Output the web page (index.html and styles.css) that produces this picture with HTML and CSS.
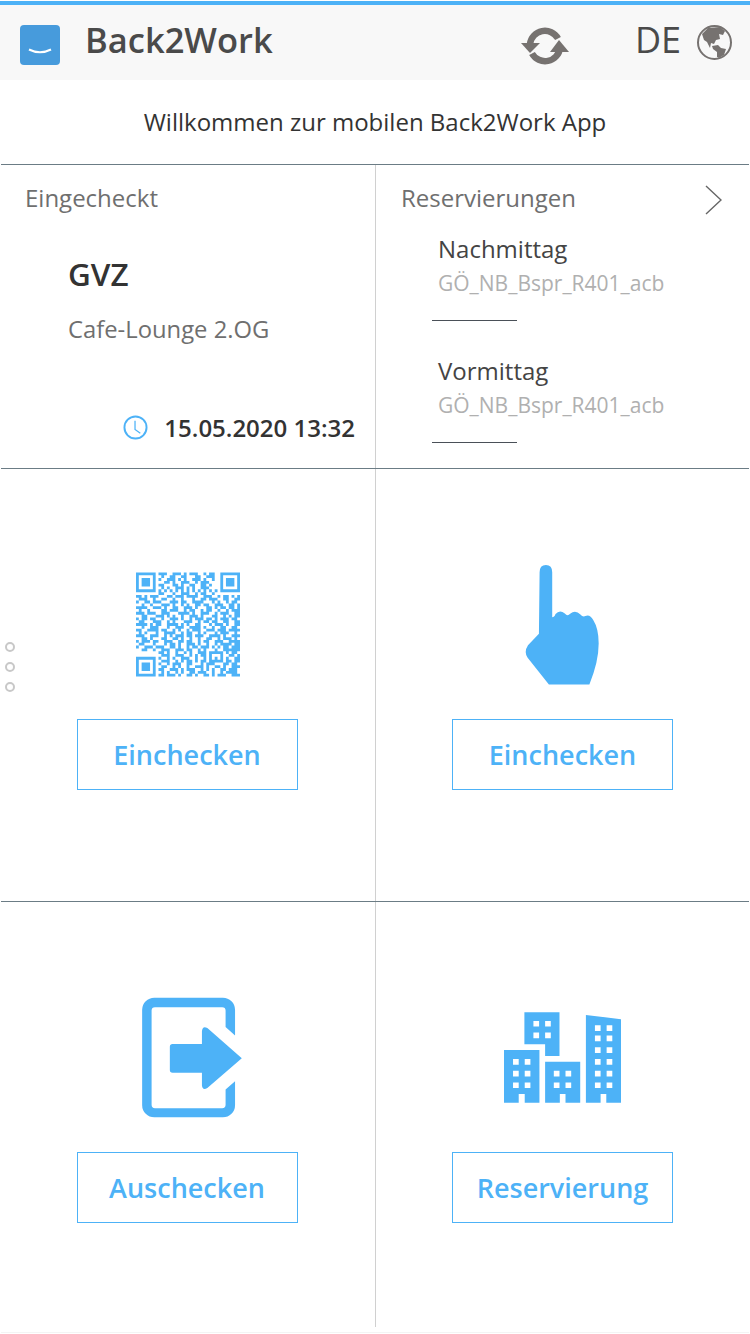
FILE: index.html
```html
<!DOCTYPE html>
<html>
    <head>
        <meta charset="UTF-8">
        <title>Back2Work</title>
        <link rel="stylesheet" href="styles.css">
    </head>
    <body>
        <div class="app">
            <header class="topbar">
                <svg class="logo" viewBox="0 0 40 40">
                    <rect width="40" height="40" rx="4" fill="#479bdc"/>
                    <path d="M9 24.500Q20 30 31 24.500" fill="none" stroke="#fff" stroke-width="2"/>
                </svg>
                <h1 class="brand">Back2Work</h1>
                <svg class="sync" viewBox="0 0 60 50">
                    <path d="M15 24A15 15 0 0 1 43 18.500" fill="none" stroke="#767270" stroke-width="6.500"/>
                    <path d="M6 23H25L15 33Z" fill="#767270"/>
                    <path d="M45 28A15 15 0 0 1 17 33.500" fill="none" stroke="#767270" stroke-width="6.500"/>
                    <path d="M35 32H54L44 20Z" fill="#767270"/>
                </svg>
                <span class="lang">DE</span>
                <svg class="globe" viewBox="0 0 45 45">
                    <circle cx="22.500" cy="22.500" r="16.500" fill="none" stroke="#767270" stroke-width="2"/>
                    <path d="M10 14L16 8 28 7 33 11 31 15 27 14 28 19 24 20 22 24 19 23 18 28 15 22 12 20Z" fill="#767270"/>
                    <path d="M20 26L26 25 29 28 34 29 32 35 27 38 25 37 25 32 21 29Z" fill="#767270"/>
                </svg>
            </header>

            <p class="welcome">Willkommen zur mobilen Back2Work App</p>

            <section class="grid info">
                <div class="cell checkin">
                    <h2 class="label">Eingecheckt</h2>
                    <div class="place">GVZ</div>
                    <div class="room">Cafe-Lounge 2.OG</div>
                    <div class="stamp">
                        <svg class="clock" viewBox="0 0 26 26">
                            <circle cx="13" cy="13" r="11.500" fill="none" stroke="#4db2f7" stroke-width="2"/>
                            <path d="M12.500 6V15L18 19" fill="none" stroke="#4db2f7" stroke-width="1.300"/>
                        </svg>
                        <span>15.05.2020 13:32</span>
                    </div>
                </div>
                <div class="cell reservations">
                    <div class="res-head">
                        <h2 class="label">Reservierungen</h2>
                        <svg class="chevron" viewBox="0 0 17 30">
                            <path d="M1 1L16 15 1 29" fill="none" stroke="#666" stroke-width="1.400"/>
                        </svg>
                    </div>
                    <div class="res-item">
                        <div class="res-time">Nachmittag</div>
                        <div class="res-room">GÖ_NB_Bspr_R401_acb</div>
                    </div>
                    <div class="res-item">
                        <div class="res-time">Vormittag</div>
                        <div class="res-room">GÖ_NB_Bspr_R401_acb</div>
                    </div>
                </div>
            </section>

            <section class="grid action-row">
                <div class="cell action">
                    <div class="icon-slot">
                        <svg class="qr" viewBox="0 0 37 37">
                            <path fill="#4db2f7" fill-rule="evenodd" d="M0 0H7V7H0ZM1 1V6H6V1ZM2 2H5V5H2ZM30 0H37V7H30ZM31 1V6H36V1ZM32 2H35V5H32ZM0 30H7V37H0ZM1 31V36H6V31ZM2 32H5V35H2Z"/>
                            <path fill="none" stroke="#4db2f7" d="M8 .5H11M13 .5H16M17 .5H18M19 .5H22M24 .5H25M26 .5H28M9 1.500H10M12 1.500H14M16 1.500H18M21 1.500H23M25 1.500H28M8 2.500H9M11 2.500H14M15 2.500H16M17 2.500H18M20 2.500H23M24 2.500H25M27 2.500H28M10 3.500H12M13 3.500H14M16 3.500H19M21 3.500H22M23 3.500H26M8 4.500H10M13 4.500H15M16 4.500H17M19 4.500H21M23 4.500H25M26 4.500H27M9 5.500H10M11 5.500H12M14 5.500H17M18 5.500H19M20 5.500H21M23 5.500H26M8 6.500H9M10 6.500H11M12 6.500H13M14 6.500H15M16 6.500H17M18 6.500H19M20 6.500H21M22 6.500H23M24 6.500H25M26 6.500H27M28 6.500H29M8 7.500H10M13 7.500H14M16 7.500H19M21 7.500H22M23 7.500H25M27 7.500H28"/>
                            <path fill="none" stroke="#4db2f7" d="M0 8.500H2M3 8.500H4M5 8.500H8M11 8.500H13M14 8.500H17M18 8.500H22M24 8.500H27M29 8.500H30M31 8.500H33M34 8.500H35M36 8.500H37M1 9.500H4M6 9.500H7M9 9.500H11M13 9.500H14M16 9.500H17M20 9.500H21M23 9.500H25M26 9.500H29M31 9.500H33M35 9.500H37M0 10.500H1M3 10.500H5M6 10.500H9M12 10.500H15M16 10.500H18M20 10.500H24M27 10.500H28M29 10.500H30M32 10.500H33M34 10.500H36M2 11.500H3M5 11.500H6M9 11.500H12M13 11.500H14M16 11.500H17M18 11.500H19M21 11.500H23M24 11.500H26M28 11.500H31M33 11.500H35M36 11.500H37M0 12.500H4M6 12.500H9M10 12.500H11M13 12.500H15M17 12.500H20M21 12.500H22M25 12.500H27M28 12.500H29M30 12.500H32M33 12.500H35M36 12.500H37M1 13.500H2M4 13.500H5M9 13.500H11M12 13.500H15M17 13.500H18M19 13.500H21M23 13.500H24M25 13.500H27M29 13.500H30M32 13.500H33M34 13.500H37M0 14.500H3M4 14.500H7M9 14.500H12M15 14.500H19M20 14.500H21M23 14.500H26M28 14.500H29M30 14.500H33M35 14.500H37M2 15.500H4M7 15.500H10M11 15.500H12M13 15.500H14M16 15.500H17M19 15.500H22M23 15.500H24M27 15.500H29M31 15.500H32M33 15.500H34M35 15.500H37M0 16.500H1M2 16.500H4M5 16.500H7M9 16.500H10M12 16.500H15M16 16.500H17M19 16.500H20M21 16.500H24M25 16.500H27M28 16.500H29M30 16.500H33M34 16.500H36M1 17.500H3M6 17.500H9M11 17.500H12M13 17.500H14M17 17.500H20M22 17.500H23M24 17.500H26M27 17.500H29M31 17.500H33M35 17.500H37M0 18.500H4M5 18.500H6M7 18.500H9M11 18.500H15M16 18.500H17M18 18.500H19M21 18.500H23M26 18.500H27M28 18.500H31M32 18.500H33M35 18.500H37"/>
                            <path fill="none" stroke="#4db2f7" d="M2 19.500H3M5 19.500H8M11 19.500H12M14 19.500H17M19 19.500H23M24 19.500H25M27 19.500H28M30 19.500H32M34 19.500H36M0 20.500H2M4 20.500H8M9 20.500H11M13 20.500H14M15 20.500H16M18 20.500H19M20 20.500H23M25 20.500H28M29 20.500H32M33 20.500H37M1 21.500H2M3 21.500H4M7 21.500H8M10 21.500H14M16 21.500H17M18 21.500H20M22 21.500H23M24 21.500H25M28 21.500H29M30 21.500H33M35 21.500H36M0 22.500H3M5 22.500H8M10 22.500H11M12 22.500H13M14 22.500H17M18 22.500H20M21 22.500H24M26 22.500H30M31 22.500H32M34 22.500H37M2 23.500H4M5 23.500H6M9 23.500H11M13 23.500H15M16 23.500H17M19 23.500H20M22 23.500H23M25 23.500H27M29 23.500H30M31 23.500H34M35 23.500H36M0 24.500H1M2 24.500H5M6 24.500H8M10 24.500H13M15 24.500H17M18 24.500H20M22 24.500H23M24 24.500H26M28 24.500H31M33 24.500H37M1 25.500H3M6 25.500H7M10 25.500H11M12 25.500H14M15 25.500H16M18 25.500H21M22 25.500H23M25 25.500H26M28 25.500H29M30 25.500H34M35 25.500H37M0 26.500H1M3 26.500H6M7 26.500H10M12 26.500H14M15 26.500H16M18 26.500H19M20 26.500H22M23 26.500H26M27 26.500H28M29 26.500H30M31 26.500H33M34 26.500H37M2 27.500H4M6 27.500H7M9 27.500H12M14 27.500H17M18 27.500H20M22 27.500H23M24 27.500H25M28 27.500H29M31 27.500H37M8 28.500H10M11 28.500H12M14 28.500H15M17 28.500H18M19 28.500H20M22 28.500H25M26 28.500H31M32 28.500H33M34 28.500H36"/>
                            <path fill="none" stroke="#4db2f7" d="M9 29.500H12M14 29.500H17M19 29.500H20M21 29.500H22M23 29.500H25M26 29.500H27M30 29.500H31M33 29.500H35M36 29.500H37M8 30.500H9M11 30.500H12M13 30.500H14M16 30.500H19M21 30.500H22M24 30.500H25M26 30.500H27M28 30.500H29M30 30.500H31M32 30.500H33M35 30.500H37M9 31.500H12M14 31.500H15M16 31.500H17M18 31.500H20M21 31.500H22M23 31.500H25M26 31.500H31M32 31.500H34M35 31.500H37M8 32.500H9M11 32.500H12M13 32.500H16M18 32.500H20M23 32.500H24M25 32.500H28M31 32.500H33M34 32.500H36M9 33.500H11M13 33.500H14M15 33.500H16M18 33.500H19M21 33.500H24M25 33.500H26M28 33.500H30M31 33.500H32M34 33.500H37M8 34.500H10M12 34.500H15M16 34.500H17M18 34.500H21M23 34.500H24M25 34.500H26M27 34.500H28M30 34.500H32M33 34.500H36M9 35.500H10M11 35.500H12M14 35.500H15M16 35.500H17M19 35.500H21M22 35.500H25M27 35.500H28M30 35.500H31M32 35.500H36M8 36.500H10M11 36.500H14M15 36.500H16M18 36.500H20M21 36.500H22M24 36.500H26M27 36.500H28M29 36.500H32M34 36.500H37"/>
                        </svg>
                    </div>
                    <a class="btn">Einchecken</a>
                </div>
                <div class="cell action">
                    <div class="icon-slot">
                        <svg class="hand" viewBox="70 20 235 375">
                            <path fill="#4db2f7" d="M120 50Q120 28 139 28 158 28 158 50V185Q165 187 168 176 180 162 196 174 204 184 212 175 228 163 243 177 250 186 258 182 272 176 282 195 298 220 298 265 298 320 270 388H148L84 308Q72 290 85 270L118 235Z"/>
                        </svg>
                    </div>
                    <a class="btn">Einchecken</a>
                </div>
            </section>

            <section class="grid action-row last">
                <div class="cell action">
                    <div class="icon-slot">
                        <svg class="exit" viewBox="25 30 330 370">
                            <path fill="#4db2f7" d="M330 150V74A36 36 0 0 0 294 38H91A36 36 0 0 0 55 74V356A36 36 0 0 0 91 392H294A36 36 0 0 0 330 356V285L302 310V355A10 10 0 0 1 292 365H93A10 10 0 0 1 83 355V76A10 10 0 0 1 93 66H292A10 10 0 0 1 302 76V125Z"/>
                            <path fill="#4db2f7" d="M145 175H232V137Q234 120 248 128L350 217 248 305Q234 314 232 298V260H145Q137 260 137 252V183Q137 175 145 175Z"/>
                        </svg>
                    </div>
                    <a class="btn">Auschecken</a>
                </div>
                <div class="cell action">
                    <div class="icon-slot">
                        <svg class="city" viewBox="42 37 350 271">
                            <path fill="#4db2f7" fill-rule="evenodd" d="M103 37H208V168H165V133H103ZM130 63V80H147V63ZM165 63V80H182V63ZM130 98V115H147V98ZM165 98V115H182V98Z"/>
                            <path fill="#4db2f7" fill-rule="evenodd" d="M42 150H148V308H104V282H86V308H42ZM69 177V194H86V177ZM104 177V194H121V177ZM69 212V229H86V212ZM104 212V229H121V212ZM69 247V264H86V247ZM104 247V264H121V247Z"/>
                            <path fill="#4db2f7" fill-rule="evenodd" d="M165 185H270V308H226V282H209V308H165ZM191 212V229H208V212ZM226 212V229H243V212ZM191 247V264H208V247ZM226 247V264H243V247Z"/>
                            <path fill="#4db2f7" fill-rule="evenodd" d="M287 45L392 58V308H348V282H331V308H287ZM314 76V93H331V76ZM349 76V93H366V76ZM314 107V124H331V107ZM349 107V124H366V107ZM314 142V159H331V142ZM349 142V159H366V142ZM314 177V194H331V177ZM349 177V194H366V177ZM314 212V229H331V212ZM349 212V229H366V212ZM314 247V264H331V247ZM349 247V264H366V247Z"/>
                        </svg>
                    </div>
                    <a class="btn">Reservierung</a>
                </div>
            </section>

            <div class="dots">
                <span></span>
                <span></span>
                <span></span>
            </div>
        </div>
    </body>
</html>
```

FILE: styles.css
```css
html, body {
    margin: 0;
    padding: 0;
    background: #fff;
}
body {
    height: 1334px;
    overflow: hidden;
    font-family: "Open Sans", "Noto Sans", sans-serif;
    color: #333;
}
.app {
    position: relative;
    margin: 0 1px;
    padding-top: 1px;
    height: 1333px;
    box-sizing: border-box;
    border-bottom: 1px solid #f4f4f4;
}
.topbar {
    display: flex;
    align-items: center;
    height: 75px;
    margin-left: -1px;
    margin-right: -1px;
    padding: 0 17px 0 20px;
    background: #f8f8f8;
    border-top: 4px solid #4db2f7;
    box-sizing: content-box;
}
.logo {
    width: 40px;
    height: 40px;
    margin-top: 5px;
}
.brand {
    margin: 0 0 6px 25px;
    font-size: 34.500px;
    font-weight: 600;
    color: #4a4a4a;
    flex: 1;
}
.sync {
    width: 60px;
    height: 50px;
    margin-top: 4px;
    margin-right: 60px;
}
.lang {
    margin-bottom: 6px;
    font-size: 36px;
    color: #4a4a4a;
}
.globe {
    width: 45px;
    height: 45px;
    margin-left: 11px;
    margin-right: -4px;
}
.welcome {
    margin: 0;
    height: 84px;
    line-height: 84px;
    text-align: center;
    font-size: 24px;
    color: #333;
}
.grid {
    display: grid;
    grid-template-columns: 374px 374px;
    border-top: 1px solid #6b7c85;
}
.cell + .cell {
    border-left: 1px solid #d0d0d0;
}
.info {
    height: 303px;
}
.label {
    margin: 0;
    font-size: 24px;
    font-weight: 400;
    line-height: 34px;
    color: #6f6f6f;
}
.checkin {
    padding: 16px 20px 0 24px;
    display: flex;
    flex-direction: column;
}
.place {
    margin: 38px 0 0 43px;
    font-size: 31.500px;
    font-weight: 600;
    line-height: 42px;
    color: #333;
}
.room {
    margin: 17px 0 0 43px;
    font-size: 23.800px;
    line-height: 34px;
    color: #6f6f6f;
}
.stamp {
    margin-top: auto;
    margin-bottom: 24px;
    display: flex;
    justify-content: flex-end;
    align-items: center;
    gap: 16px;
    font-size: 24px;
    font-weight: 600;
    color: #333;
}
.clock {
    width: 25px;
    height: 25px;
}
.reservations {
    padding: 16px 27px 0 25px;
}
.res-head {
    display: flex;
    justify-content: space-between;
    align-items: center;
}
.chevron {
    width: 17px;
    height: 30px;
    margin-top: 4px;
}
.res-item {
    margin: 17px 0 0 31px;
    width: 85px;
    height: 89px;
    box-sizing: border-box;
    padding-left: 6px;
    white-space: nowrap;
    border-bottom: 1px solid #4a5058;
}
.res-item + .res-item {
    margin-top: 33px;
}
.res-time {
    font-size: 24px;
    line-height: 34px;
    color: #444;
}
.res-room {
    font-size: 21px;
    line-height: 34px;
    color: #b0b0b0;
}
.action-row {
    height: 432px;
}
.action-row.last {
    height: 425px;
}
.action {
    display: flex;
    flex-direction: column;
    align-items: center;
}
.action:first-child .btn {
    margin-right: 2px;
}
.icon-slot {
    height: 130px;
    margin-top: 90px;
    margin-bottom: 30px;
    display: flex;
    align-items: center;
    justify-content: center;
}
.qr {
    width: 104px;
    height: 105px;
}
.hand {
    width: 78px;
    height: 125px;
    margin-right: 2px;
}
.exit {
    width: 111.500px;
    height: 125px;
}
.city {
    width: 117px;
    height: 91px;
}
.btn {
    display: block;
    width: 221px;
    height: 71px;
    box-sizing: border-box;
    border: 1px solid #4db2f7;
    text-align: center;
    line-height: 69px;
    font-size: 27px;
    font-weight: 600;
    color: #4db2f7;
}
.dots {
    position: absolute;
    left: 4px;
    top: 642px;
    display: flex;
    flex-direction: column;
    gap: 10px;
}
.dots span {
    display: block;
    width: 10px;
    height: 10px;
    box-sizing: border-box;
    border: 2px solid #c8c8c8;
    border-radius: 50%;
}
```
